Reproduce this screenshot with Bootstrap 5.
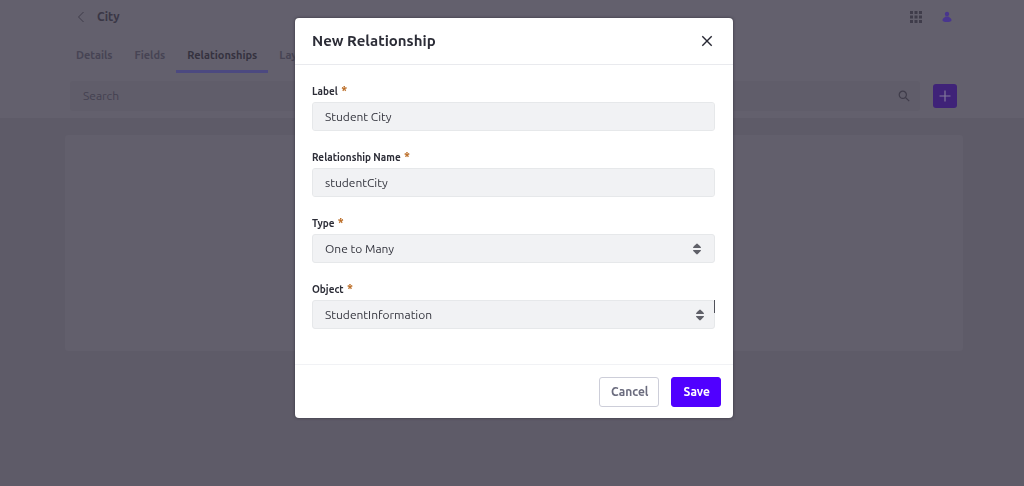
<!DOCTYPE html>
<html lang="en">
<head>
<meta charset="utf-8">
<meta name="viewport" content="width=device-width, initial-scale=1">
<title>New Relationship</title>
<link rel="stylesheet" href="https://cdn.jsdelivr.net/npm/bootstrap@5.3.0/dist/css/bootstrap.min.css">
<style>
body{font-family:Ubuntu,"Noto Sans",sans-serif;font-size:12px;line-height:16px;background:#5e5b68;color:#3a3746;min-height:100vh}
.page-wrap{max-width:902px;padding-left:4px;margin:0 auto}
.page-head{background:#63606d}
.title-row{height:34px;padding:0 11px 0 12px}
.title-row h1{font-size:12px;line-height:16px;font-weight:700}
.icon-btn{background:none;border:0;padding:0;line-height:0;color:#3f3c4a}
.user-btn{color:#49368f}
.tab-strip{height:39px}
.tab-strip .nav-link{height:39px;padding:13px 11px 0;font-size:11px;line-height:16px;font-weight:700;color:#474454;border-bottom:3px solid transparent}
.tab-strip .nav-link.active{color:#35323f;border-bottom-color:#4c4980}
.search-row{height:45px;padding:0 6px 0 5px;gap:13px}
.search-box{height:30px;background:#605d6a;border-radius:3px;padding:0 10px 0 13px}
.search-box input{background:none;border:0;outline:0;padding:0;color:#444151;font-size:12px}
.search-box input::placeholder{color:#444151;opacity:1}
.add-btn{width:24px;height:24px;background:#3f2378;color:#837a9b;border:0;border-radius:3px;padding:0;line-height:0}
.empty-panel{height:216px;margin-top:17px;background:#625f6c;border-radius:3px}
.modal{padding-left:4px}
.modal-dialog{max-width:438px;margin:18px auto}
.modal-content{border:0;border-radius:4px;box-shadow:0 0 3px #35323f;color:#2c2d37}
.modal-header{height:47px;padding:0 18px 0 17px;border-color:#e9eaee}
.modal-title{font-size:15px;line-height:20px;font-weight:700}
.modal-body{padding:17px 18px 35px 17px}
.field-block{margin-bottom:17px}
.field-block:last-child{margin-bottom:0}
.field-block label{display:block;font-size:10px;line-height:20px;font-weight:700}
.field-block label span{color:#b9681f;font-size:12px;line-height:12px;margin-left:1px}
.field-block .form-control,.field-block .form-select{height:29px;background-color:#f1f2f4;border:1px solid #e6e8ea;border-radius:3px;color:#33343d;font-size:12px;line-height:16px;padding:4px 12px}
.field-block .form-select{background-image:url("data:image/svg+xml,%3Csvg xmlns='http://www.w3.org/2000/svg' viewBox='0 0 8 12'%3E%3Cpath fill='%23606169' d='M4 0.500Q4.500 0.500 8 4.200Q8 5 7.500 5H.5Q0 5 0 4.200Q3.500 .5 4 .5M4 11.500Q4.500 11.500 8 7.800Q8 7 7.500 7H.5Q0 7 0 7.800Q3.500 11.500 4 11.500'/%3E%3C/svg%3E");background-size:8px 12px;background-position:right 13px center}
.field-block .object-select{background-position:right 10px center}
.edge-mark{top:0;right:0;width:1px;height:13px;background:#50515a}
.modal-footer{height:54px;padding:0 12px;gap:12px;border-color:#f1f2f5}
.modal-footer .btn{height:30px;margin:0;padding:0 10px 0 11px;font-size:12px;line-height:16px;font-weight:700;border-radius:3px}
.btn-cancel,.btn-cancel:hover{background:#fff;border-color:#cdced9;color:#6b6c7e}
.btn-save,.btn-save:hover{background:#5000ff;border-color:#5000ff;color:#fff}
</style>
</head>
<body>
<header class="page-head">
  <div class="page-wrap">
    <div class="title-row d-flex align-items-center">
      <button class="icon-btn" aria-label="Back"><svg width="8" height="12" viewBox="0 0 8 12" fill="none" stroke="currentColor" stroke-width="1"><path d="M6.500 1 1.500 6l5 5"/></svg></button>
      <h1 class="mb-0 ms-2 ps-1">City</h1>
      <button class="icon-btn ms-auto me-3" aria-label="Applications"><svg width="12" height="12" viewBox="0 0 12 12" fill="currentColor"><path d="M0 0h3v3H0zM4.500 0h3v3h-3zM9 0h3v3H9zM0 4.500h3v3H0zM4.500 4.500h3v3h-3zM9 4.500h3v3H9zM0 9h3v3H0zM4.500 9h3v3h-3zM9 9h3v3H9z"/></svg></button>
      <button class="icon-btn user-btn ms-1" aria-label="User"><svg width="10" height="12" viewBox="0 0 10 12" fill="currentColor"><circle cx="5" cy="3" r="2.200"/><path d="M.5 9C.5 7.500 2 7 3.500 5.500h3C8 7 9.500 7.500 9.500 9Q9.500 11 5 11T.5 9"/></svg></button>
    </div>
    <nav class="nav tab-strip flex-nowrap">
      <a class="nav-link" href="#">Details</a>
      <a class="nav-link" href="#">Fields</a>
      <a class="nav-link active" href="#" aria-current="page">Relationships</a>
      <a class="nav-link" href="#">Layouts</a>
    </nav>
    <div class="search-row d-flex align-items-center">
      <div class="search-box d-flex align-items-center flex-grow-1">
        <input class="flex-grow-1" type="text" placeholder="Search" aria-label="Search">
        <button class="icon-btn" aria-label="Submit search"><svg width="12" height="12" viewBox="0 0 12 12" fill="none" stroke="currentColor" stroke-width="1.200"><circle cx="4.800" cy="4.800" r="3.600"/><path d="m7.500 7.500 3.700 3.700"/></svg></button>
      </div>
      <button class="add-btn" aria-label="Add"><svg width="12" height="12" viewBox="0 0 12 12" stroke="currentColor" stroke-width="1.200"><path d="M6 .5v11M.5 6h11"/></svg></button>
    </div>
  </div>
</header>
<main class="page-wrap"><div class="empty-panel"></div></main>

<div class="modal d-block" tabindex="-1" role="dialog" aria-labelledby="dialogTitle">
  <div class="modal-dialog">
    <form class="modal-content">
      <div class="modal-header">
        <h2 class="modal-title" id="dialogTitle">New Relationship</h2>
        <button type="button" class="icon-btn" aria-label="Close"><svg width="16" height="12" viewBox="0 0 16 12" fill="none" stroke="#272833" stroke-width="1.400"><path d="m3.300 1.300 9.400 9.400M12.700 1.300l-9.400 9.400"/></svg></button>
      </div>
      <div class="modal-body">
        <div class="field-block">
          <label for="labelField">Label <span>*</span></label>
          <input class="form-control" id="labelField" type="text" value="Student City">
        </div>
        <div class="field-block">
          <label for="nameField">Relationship Name <span>*</span></label>
          <input class="form-control" id="nameField" type="text" value="studentCity">
        </div>
        <div class="field-block">
          <label for="typeField">Type <span>*</span></label>
          <select class="form-select" id="typeField"><option>One to Many</option></select>
        </div>
        <div class="field-block">
          <label for="objectField">Object <span>*</span></label>
          <div class="position-relative">
            <select class="form-select object-select" id="objectField"><option>StudentInformation</option></select>
            <i class="edge-mark position-absolute"></i>
          </div>
        </div>
      </div>
      <div class="modal-footer">
        <button type="button" class="btn btn-cancel">Cancel</button>
        <button type="button" class="btn btn-save">Save</button>
      </div>
    </form>
  </div>
</div>
<script src="https://cdn.jsdelivr.net/npm/bootstrap@5.3.0/dist/js/bootstrap.bundle.min.js"></script>
</body>
</html>
